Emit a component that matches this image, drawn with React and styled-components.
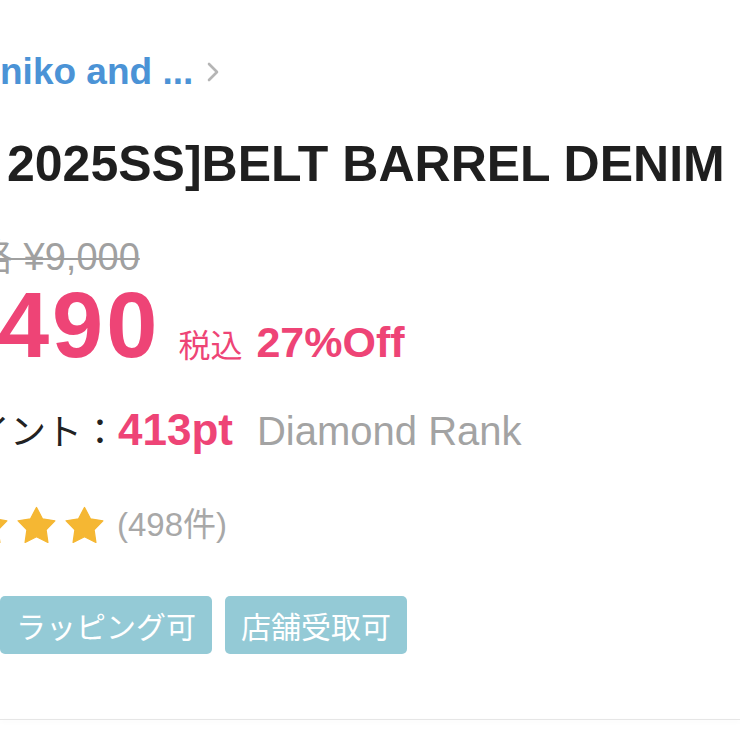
import React from "react";
import styled, { createGlobalStyle } from "styled-components";

const Global = createGlobalStyle`
  html, body { margin: 0; padding: 0; background: #ffffff; }
  body { width: 740px; height: 740px; overflow: hidden; font-family: "Liberation Sans", "Noto Sans CJK JP", sans-serif; }
`;

const Page = styled.div`
  width: 740px;
  height: 740px;
  display: flex;
  flex-direction: column;
  overflow: hidden;
  background: #fff;
`;

const Row = styled.div`
  display: flex;
  align-items: ${(p) => p.$align || "center"};
  margin-left: ${(p) => p.$shift || 0}px;
  margin-top: ${(p) => p.$top || 0}px;
  white-space: nowrap;
  flex-shrink: 0;
`;

const Brand = styled.a`
  font-size: 37px;
  line-height: 44px;
  font-weight: 700;
  color: #4b93d6;
  text-decoration: none;
`;

const Chevron = styled.svg`
  margin-left: 13px;
  width: 14px;
  height: 22px;
`;

const Title = styled.h1`
  margin: 0;
  font-size: 50px;
  line-height: 60px;
  font-weight: 700;
  color: #1f1f1f;
`;

const OldPrice = styled.span`
  font-size: 38px;
  line-height: 44px;
  color: #a0a0a0;
  text-decoration: line-through;
  text-decoration-thickness: 2px;
`;

const Price = styled.span`
  font-size: 92px;
  line-height: 92px;
  font-weight: 700;
  letter-spacing: 3px;
  color: #ee4476;
`;

const Tax = styled.span`
  margin-left: 18px;
  font-size: 32px;
  color: #ee4476;
`;

const Off = styled.span`
  margin-left: 14px;
  font-size: 43px;
  font-weight: 700;
  color: #ee4476;
`;

const PointLabel = styled.span`
  font-size: 36px;
  line-height: 48px;
  color: #222;
`;

const Points = styled.span`
  font-size: 44px;
  line-height: 48px;
  font-weight: 700;
  color: #ee4476;
`;

const Rank = styled.span`
  margin-left: 24px;
  font-size: 40px;
  line-height: 48px;
  color: #a3a3a3;
`;

const Stars = styled.div`
  display: flex;
  gap: 9px;
`;

const StarIcon = styled.svg`
  width: 39px;
  height: 39px;
  display: block;
`;

const Count = styled.span`
  margin-left: 13px;
  font-size: 33px;
  line-height: 44px;
  color: #a8a8a8;
`;

const Tags = styled.div`
  display: flex;
  gap: 13px;
`;

const Tag = styled.span`
  display: inline-flex;
  align-items: center;
  height: 58px;
  padding: 0 16px;
  border-radius: 5px;
  background: #94cad6;
  color: #ffffff;
  font-size: 30px;
  font-family: "Noto Sans CJK JP", sans-serif;
`;

const Divider = styled.div`
  margin-top: 65px;
  height: 1px;
  background: #e6e6e6;
  box-shadow: 0 2px 4px rgba(0, 0, 0, 0.05);
  flex-shrink: 0;
`;

const Star = () => (
  <StarIcon viewBox="0 0 24 24">
    <path
      d="M12 .9L15.64 7.9 23.3 9.1 17.9 14.72 19 22.4 12 18.9 5 22.4 6.1 14.72 .7 9.1 8.36 7.9Z"
      fill="#f5b733"
      stroke="#f5b733"
      strokeWidth="0.8"
      strokeLinejoin="round"
    />
  </StarIcon>
);

export default function App() {
  return (
    <Page>
      <Global />
      <Row $top={50}>
        <Brand href="#">niko and ...</Brand>
        <Chevron viewBox="0 0 14 22">
          <path d="M3 3l8 8-8 8" fill="none" stroke="#b5b5b5" strokeWidth="2.6" strokeLinecap="round" strokeLinejoin="round" />
        </Chevron>
      </Row>
      <Row $top={40} $shift={7}>
        <Title>2025SS]BELT BARREL DENIM</Title>
      </Row>
      <Row $top={41} $shift={-139}>
        <OldPrice>通常価格 ¥9,000</OldPrice>
      </Row>
      <Row $top={0} $shift={-139} $align="baseline">
        <Price>¥6,490</Price>
        <Tax>税込</Tax>
        <Off>27%Off</Off>
      </Row>
      <Row $top={35} $shift={-62} $align="baseline">
        <PointLabel>ポイント：</PointLabel>
        <Points>413pt</Points>
        <Rank>Diamond Rank</Rank>
      </Row>
      <Row $top={46} $shift={-127}>
        <Stars>
          <Star />
          <Star />
          <Star />
          <Star />
          <Star />
        </Stars>
        <Count>(498件)</Count>
      </Row>
      <Row $top={49}>
        <Tags>
          <Tag>ラッピング可</Tag>
          <Tag>店舗受取可</Tag>
        </Tags>
      </Row>
      <Divider />
    </Page>
  );
}
